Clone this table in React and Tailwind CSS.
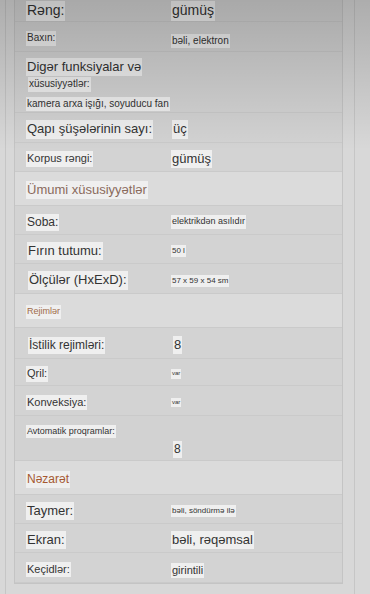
const rows = [
  { h: "h-[22px]", label: "Rəng:", ls: "text-[14px]", value: "gümüş", vs: "text-[14px]", align: "items-start pt-[1px]" },
  { h: "h-[30px]", label: "Baxın:", ls: "text-[10px]", value: "bəli, elektron", vs: "text-[10px] mt-[5px]" },
  { type: "multi" },
  { h: "h-[30px]", label: "Qapı şüşələrinin sayı:", ls: "text-[13px]", value: "üç", vs: "text-[13px] ml-[1px]" },
  { h: "h-[29px]", label: "Korpus rəngi:", ls: "text-[11px]", value: "gümüş", vs: "text-[13px]" },
  { type: "head", h: "h-[34px]", label: "Ümumi xüsusiyyətlər", ls: "text-[13px]", color: "text-[#8a6a5c]" },
  { h: "h-[29px]", label: "Soba:", ls: "text-[12px]", value: "elektrikdən asılıdır", vs: "text-[9px]" },
  { h: "h-[29px]", label: "Fırın tutumu:", ls: "text-[13px] ml-[1px]", value: "50 l", vs: "text-[8px]" },
  { h: "h-[30px]", label: "Ölçülər (HxExD):", ls: "text-[13px] ml-[2px]", value: "57 x 59 x 54 sm", vs: "text-[8px]" },
  { type: "head", h: "h-[34px]", label: "Rejimlər", ls: "text-[9px]", color: "text-[#a06a48]" },
  { h: "h-[31px]", label: "İstilik rejimləri:", ls: "text-[12px] ml-[2px]", value: "8", vs: "text-[13px] ml-[2px]" },
  { h: "h-[27px]", label: "Qril:", ls: "text-[11px]", value: "var", vs: "text-[6px]" },
  { h: "h-[30px]", label: "Konveksiya:", ls: "text-[11px]", value: "var", vs: "text-[6px]" },
  { type: "auto" },
  { type: "head", h: "h-[34px]", label: "Nəzarət", ls: "text-[12px]", color: "text-[#a5582f]" },
  { h: "h-[29px]", label: "Taymer:", ls: "text-[13px]", value: "bəli, söndürmə ilə", vs: "text-[8px]" },
  { h: "h-[29px]", label: "Ekran:", ls: "text-[13px]", value: "bəli, rəqəmsal", vs: "text-[13px]" },
  { h: "h-[30px]", label: "Keçidlər:", ls: "text-[11px]", value: "girintili", vs: "text-[11px] mt-[2px]" },
];

function Mark({ className, color = "text-[#333]", children }) {
  return (
    <span className={`inline-block bg-[#efefef] px-[1px] py-[1px] leading-tight ${color} ${className}`}>
      {children}
    </span>
  );
}

function Row({ row }) {
  if (row.type === "head") {
    return (
      <div className={`${row.h} flex items-center border-b border-[#cacaca] bg-[#dbdbdb] pl-[11px] pt-[3px] leading-none`}>
        <Mark className={row.ls} color={row.color}>{row.label}</Mark>
      </div>
    );
  }

  if (row.type === "multi") {
    return (
      <div className="h-[61px] border-b border-[#cacaca] bg-[#d4d4d4] pl-[11px] pt-[6px] flex flex-col items-start leading-none">
        <Mark className="text-[13px]">Digər funksiyalar və</Mark>
        <Mark className="text-[10px] ml-[2px] mt-[1px]">xüsusiyyətlər:</Mark>
        <Mark className="text-[10px] mt-[5px]">kamera arxa işığı, soyuducu fan</Mark>
      </div>
    );
  }

  if (row.type === "auto") {
    return (
      <div className="h-[45px] border-b border-[#cacaca] bg-[#d2d2d2] pt-[9px] flex flex-col items-start leading-none">
        <Mark className="text-[9px] ml-[11px]">Avtomatik proqramlar:</Mark>
        <Mark className="text-[12px] ml-[158px] mt-[3px]">8</Mark>
      </div>
    );
  }

  return (
    <div className={`${row.h} flex ${row.align || "items-center pt-[4px]"} border-b border-[#cacaca] bg-[#d3d3d3] leading-none`}>
      <div className="w-[156px] pl-[11px] shrink-0 flex">
        <Mark className={row.ls}>{row.label}</Mark>
      </div>
      <Mark className={row.vs}>{row.value}</Mark>
    </div>
  );
}

export default function App() {
  return (
    <div
      className="relative h-[594px] w-[370px] overflow-hidden bg-[#d8d8d8]"
      style={{ fontFamily: '"Liberation Sans", Arial, sans-serif' }}
    >
      <div className="flex h-full pl-[5px]">
        <div className="flex h-full border-l border-[#c6c6c6] pl-[8px]">
          <div className="flex h-full border-r border-[#c6c6c6] pr-[11px]">
            {/* spec table */}
            <div className="w-[329px] self-start border-x border-b border-[#c4c4c4]">
              {rows.map((row, i) => (
                <Row key={i} row={row} />
              ))}
            </div>
          </div>
        </div>
      </div>
      <div className="pointer-events-none absolute inset-x-0 top-0 h-[150px] bg-gradient-to-b from-black/20 to-transparent" />
    </div>
  );
}
